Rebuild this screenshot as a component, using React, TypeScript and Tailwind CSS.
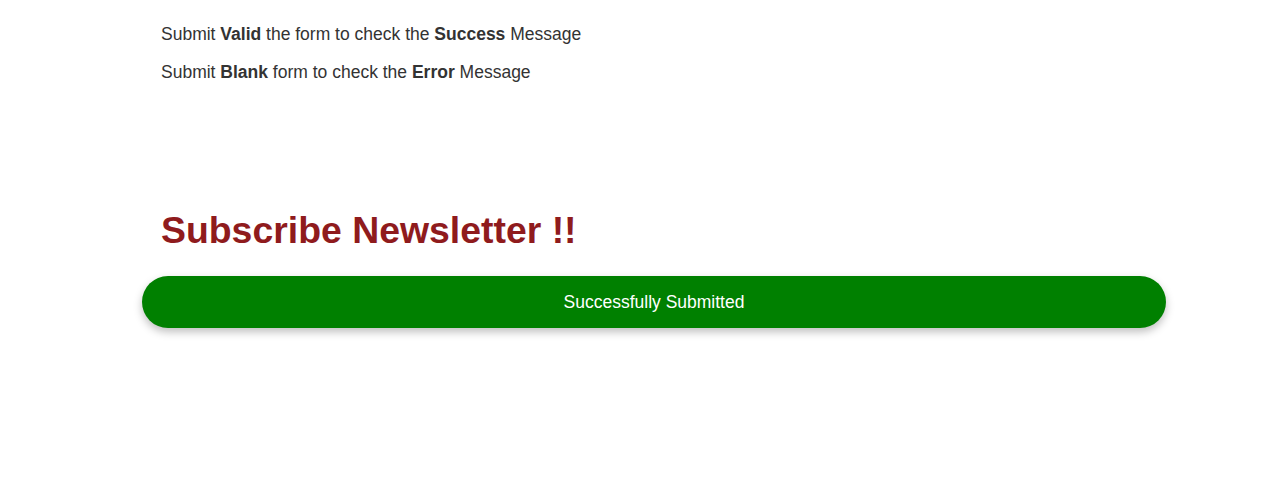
export default function App() {
  return (
    <main className="min-h-[479px] bg-white font-['Liberation_Sans',Arial,sans-serif] text-[#333333]">
      <div className="ml-[142px] w-[1024px] pt-[24px]">
        {/* Instructions */}
        <div className="flex flex-col gap-[17px] px-[19px] text-[17.5px] leading-[21px]">
          <p>
            Submit <b>Valid</b> the form to check the <b>Success</b> Message
          </p>
          <p>
            Submit <b>Blank</b> form to check the <b>Error</b> Message
          </p>
        </div>

        {/* Newsletter */}
        <h2 className="mt-[125px] px-[19px] text-[37.4px] font-bold leading-[44px] text-[#8f1b1d]">
          Subscribe Newsletter !!
        </h2>
        <div className="mt-[24px] flex h-[52px] items-center justify-center rounded-full bg-[#008000] text-[17.5px] text-white shadow-[0_4px_8px_rgba(0,0,0,0.25)]">
          Successfully Submitted
        </div>
      </div>
    </main>
  )
}
